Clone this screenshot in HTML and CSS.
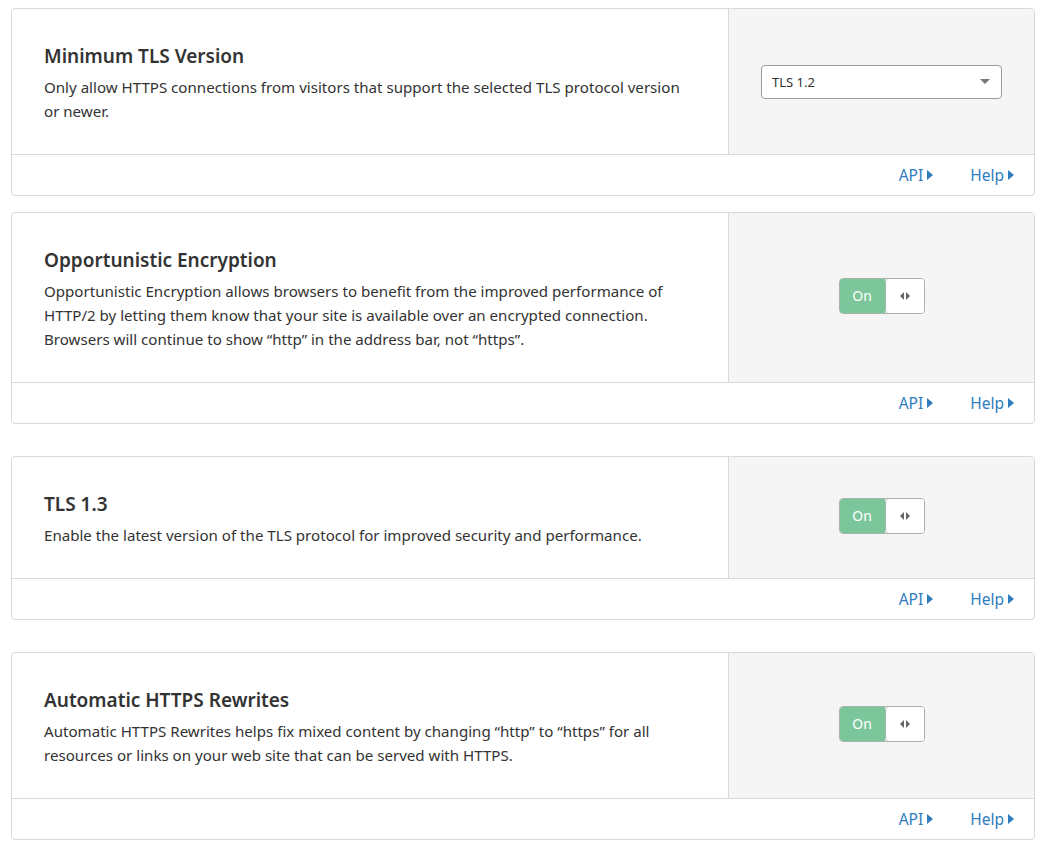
FILE: index.html
```html
<!DOCTYPE html>
<html>
<head>
<meta charset="utf-8">
<link rel="stylesheet" href="styles.css">
</head>
<body>
<div class="page">
  <div class="card">
    <div class="card-main">
      <div class="info">
        <h3 class="title">Minimum TLS Version</h3>
        <p class="desc">Only allow HTTPS connections from visitors that support the selected TLS protocol version or newer.</p>
      </div>
      <div class="control">
        <div class="select"><span>TLS 1.2</span><span class="caret"></span></div>
      </div>
    </div>
    <div class="card-foot">
      <a class="link">API<span class="tri"></span></a>
      <a class="link">Help<span class="tri"></span></a>
    </div>
  </div>

  <div class="card">
    <div class="card-main">
      <div class="info">
        <h3 class="title">Opportunistic Encryption</h3>
        <p class="desc">Opportunistic Encryption allows browsers to benefit from the improved performance of HTTP/2 by letting them know that your site is available over an encrypted connection. Browsers will continue to show “http” in the address bar, not “https”.</p>
      </div>
      <div class="control">
        <div class="toggle"><span class="on">On</span><span class="knob"><span class="tl"></span><span class="tr"></span></span></div>
      </div>
    </div>
    <div class="card-foot">
      <a class="link">API<span class="tri"></span></a>
      <a class="link">Help<span class="tri"></span></a>
    </div>
  </div>

  <div class="card gap-lg">
    <div class="card-main">
      <div class="info">
        <h3 class="title">TLS 1.3</h3>
        <p class="desc">Enable the latest version of the TLS protocol for improved security and performance.</p>
      </div>
      <div class="control">
        <div class="toggle"><span class="on">On</span><span class="knob"><span class="tl"></span><span class="tr"></span></span></div>
      </div>
    </div>
    <div class="card-foot">
      <a class="link">API<span class="tri"></span></a>
      <a class="link">Help<span class="tri"></span></a>
    </div>
  </div>

  <div class="card gap-lg">
    <div class="card-main">
      <div class="info">
        <h3 class="title">Automatic HTTPS Rewrites</h3>
        <p class="desc">Automatic HTTPS Rewrites helps fix mixed content by changing “http” to “https” for all resources or links on your web site that can be served with HTTPS.</p>
      </div>
      <div class="control">
        <div class="toggle"><span class="on">On</span><span class="knob"><span class="tl"></span><span class="tr"></span></span></div>
      </div>
    </div>
    <div class="card-foot">
      <a class="link">API<span class="tri"></span></a>
      <a class="link">Help<span class="tri"></span></a>
    </div>
  </div>
</div>
</body>
</html>
```

FILE: styles.css
```css
* { box-sizing: border-box; }
html, body { margin: 0; padding: 0; background: #fff; }
body {
  font-family: "Noto Sans", "Open Sans", sans-serif;
  color: #333;
}
.page {
  padding: 8px 11px 0 11px;
  display: flex;
  flex-direction: column;
  width: 1046px;
}
.card {
  border: 1px solid #d9d9d9;
  border-radius: 4px;
  margin-bottom: 16px;
  overflow: hidden;
}
.card.gap-lg { margin-top: 16px; }
.card-main {
  display: flex;
  border-bottom: 1px solid #d9d9d9;
}
.info {
  width: 717px;
  padding: 32px 32px 31px 32px;
  border-right: 1px solid #d9d9d9;
}
.title {
  margin: 0 0 4px 0;
  font-size: 19px;
  line-height: 30px;
  font-weight: 600;
  color: #333;
}
.desc {
  margin: 0;
  font-size: 15.1px;
  line-height: 24px;
  color: #333;
}
.control {
  flex: 1;
  background: #f5f5f5;
  display: flex;
  align-items: center;
  justify-content: center;
}
.select {
  width: 241px;
  height: 34px;
  background: #fff;
  border: 1px solid #9a9a9a;
  border-radius: 4px;
  display: flex;
  align-items: center;
  justify-content: space-between;
  padding: 0 11px 0 10px;
  font-size: 13px;
  color: #333;
}
.caret {
  width: 0; height: 0;
  border-left: 5px solid transparent;
  border-right: 5px solid transparent;
  border-top: 5px solid #777;
}
.toggle {
  display: flex;
  width: 86px;
  height: 36px;
  border: 1px solid #a8b3ad;
  border-radius: 4px;
  overflow: hidden;
  margin-bottom: 4px;
}
.toggle .on {
  width: 45px;
  background: #7bc69b;
  color: #fff;
  font-size: 14px;
  display: flex;
  align-items: center;
  justify-content: center;
}
.toggle .knob {
  flex: 1;
  background: #fff;
  border-left: 1px solid #a8b3ad;
  border-radius: 4px 0 0 4px;
  display: flex;
  align-items: center;
  justify-content: center;
  gap: 2px;
}
.tl, .tr { width: 0; height: 0; border-top: 4px solid transparent; border-bottom: 4px solid transparent; }
.tl { border-right: 4px solid #666; }
.tr { border-left: 4px solid #666; }
.card-foot {
  height: 40px;
  display: flex;
  align-items: center;
  justify-content: flex-end;
  gap: 37px;
  padding-right: 20px;
}
.link {
  color: #2f7cbf;
  font-size: 15.5px;
  display: flex;
  align-items: center;
  gap: 4px;
}
.tri {
  width: 0; height: 0;
  border-top: 5px solid transparent;
  border-bottom: 5px solid transparent;
  border-left: 6px solid #2f7cbf;
}
```
